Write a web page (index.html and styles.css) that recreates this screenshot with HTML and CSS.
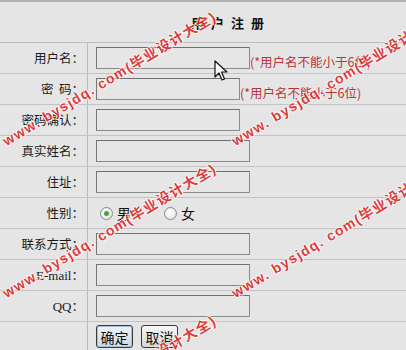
FILE: index.html
```html
<!DOCTYPE html>
<html lang="zh-CN">
<head>
<meta charset="utf-8">
<title>用户注册</title>
<link rel="stylesheet" href="styles.css">
</head>
<body>
<div class="page">
  <form class="form">
    <div class="title-row"><h1 class="title">用户注册</h1></div>
    <div class="row">
      <div class="label">用户名：</div>
      <div class="field"><input class="inp" type="text"><span class="hint">(*用户名不能小于6位)</span></div>
    </div>
    <div class="row">
      <div class="label">密&nbsp;&nbsp;码：</div>
      <div class="field"><input class="inp short" type="password"><span class="hint">(*用户名不能小于6位)</span></div>
    </div>
    <div class="row">
      <div class="label">密码确认：</div>
      <div class="field"><input class="inp short" type="password"></div>
    </div>
    <div class="row">
      <div class="label">真实姓名：</div>
      <div class="field"><input class="inp" type="text"></div>
    </div>
    <div class="row">
      <div class="label">住址：</div>
      <div class="field"><input class="inp" type="text"></div>
    </div>
    <div class="row">
      <div class="label">性别：</div>
      <div class="field radios">
        <label class="opt"><span class="radio checked"></span>男</label>
        <label class="opt"><span class="radio"></span>女</label>
      </div>
    </div>
    <div class="row">
      <div class="label">联系方式：</div>
      <div class="field"><input class="inp" type="text"></div>
    </div>
    <div class="row">
      <div class="label"><span class="latin">E-mail</span>：</div>
      <div class="field"><input class="inp" type="text"></div>
    </div>
    <div class="row">
      <div class="label"><span class="latin">QQ</span>：</div>
      <div class="field"><input class="inp" type="text"></div>
    </div>
    <div class="row last">
      <div class="label"></div>
      <div class="field buttons">
        <button type="button" class="btn primary">确定</button>
        <button type="button" class="btn">取消</button>
      </div>
    </div>
  </form>

  <svg class="cursor" width="14" height="22" viewBox="0 0 14 22">
    <path d="M1 1 L1 17 L5 13 L8 20 L10.5 19 L7.5 12 L13 12 Z" fill="#fff" stroke="#111" stroke-width="1.2" stroke-linejoin="round"/>
  </svg>

  <span class="wm wm-a">www. bysjdq. com(毕业设计大全)</span>
  <span class="wm wm-b">www. bysjdq. com(毕业设计大全)</span>
  <span class="wm wm-c">www. bysjdq. com(毕业设计大全)</span>
  <span class="wm wm-d">www. bysjdq. com(毕业设计大全)</span>
  <span class="wm wm-e">www. bysjdq. com(毕业设计大全)</span>
</div>
</body>
</html>
```

FILE: styles.css
```css
* { box-sizing: border-box; }
html, body { margin: 0; padding: 0; }
body {
  background: #e5e5e5;
  font-family: "Noto Sans CJK SC", "Noto Sans", sans-serif;
  font-size: 12px;
  color: #1c1c1c;
  overflow: hidden;
}
.page {
  position: relative;
  width: 406px;
  height: 350px;
  overflow: hidden;
  border-top: 2px solid #b3b3b3;
}
.form { margin: 0; }
.title-row {
  height: 41px;
  border-bottom: 1px solid #bdbdbd;
  display: flex;
  align-items: center;
  padding-left: 191px;
}
.title {
  margin: 0;
  font-size: 13px;
  font-weight: bold;
  letter-spacing: 7px;
  color: #111;
}
.row {
  display: flex;
  height: 31px;
  border-bottom: 1px solid #c3c3c3;
}
.row.last { border-bottom: 0; }
.label {
  width: 88px;
  flex: none;
  border-right: 1px solid #b9b9b9;
  text-align: right;
  padding-right: 3px;
  line-height: 30px;
  font-size: 12.5px;
  white-space: nowrap;
}
.latin {
  font-family: "Liberation Serif", serif;
  font-size: 13px;
}
.field {
  display: flex;
  align-items: center;
  padding-left: 8px;
  flex: 1;
}
.inp {
  width: 154px;
  height: 22px;
  margin: 0;
  padding: 0 2px;
  border: 1px solid #8a8a8a;
  border-top-color: #707070;
  border-left-color: #777;
  background: #e6e6e6;
  font: inherit;
}
.inp.short { width: 144px; }
.hint {
  color: #b8343a;
  font-size: 12.5px;
  padding-top: 7px;
  white-space: nowrap;
}
.opt {
  display: flex;
  align-items: center;
  font-size: 14px;
  color: #111;
}
.opt:first-child { margin-left: 4px; }
.opt + .opt { margin-left: 33px; }
.radio {
  width: 13px;
  height: 13px;
  border-radius: 50%;
  border: 1px solid #7f8c98;
  background: radial-gradient(circle at 40% 40%, #ffffff, #dcdcdc);
  margin: 0 4px 0 0;
  display: inline-flex;
  align-items: center;
  justify-content: center;
}
.radio.checked::after {
  content: "";
  width: 5px;
  height: 5px;
  border-radius: 50%;
  background: #46a046;
}
.buttons { gap: 8px; align-items: flex-start; padding-top: 3px; }
.btn {
  height: 23px;
  width: 37px;
  padding: 0;
  margin: 0;
  font-family: "Noto Sans CJK SC", sans-serif;
  font-size: 14px;
  line-height: 20px;
  color: #111;
  border: 1px solid #3a3a3a;
  border-radius: 3px;
  background: linear-gradient(#f6f6f6, #d6d6d6);
}
.btn.primary {
  background: linear-gradient(#eef3f8, #cbd8e6);
  box-shadow: inset 0 0 0 1px #a9c0da;
}
.cursor {
  position: absolute;
  left: 214px;
  top: 58px;
}
.wm {
  position: absolute;
  font-family: "Liberation Sans", "Noto Sans CJK SC", sans-serif;
  font-weight: bold;
  font-size: 14px;
  line-height: 16px;
  letter-spacing: 1.3px;
  color: #dd2a2a;
  white-space: nowrap;
  transform-origin: 0 50%;
  transform: rotate(-31deg);
  text-shadow: 1px 0 0 #fff, -1px 0 0 #fff, 0 1px 0 #fff, 0 -1px 0 #fff;
  opacity: 0.9;
}
.wm-a { left: 4px; top: 132px; }
.wm-b { left: 233px; top: 132px; }
.wm-c { left: 4px; top: 284px; }
.wm-d { left: 233px; top: 284px; }
.wm-e { left: 4px; top: 436px; }
```
